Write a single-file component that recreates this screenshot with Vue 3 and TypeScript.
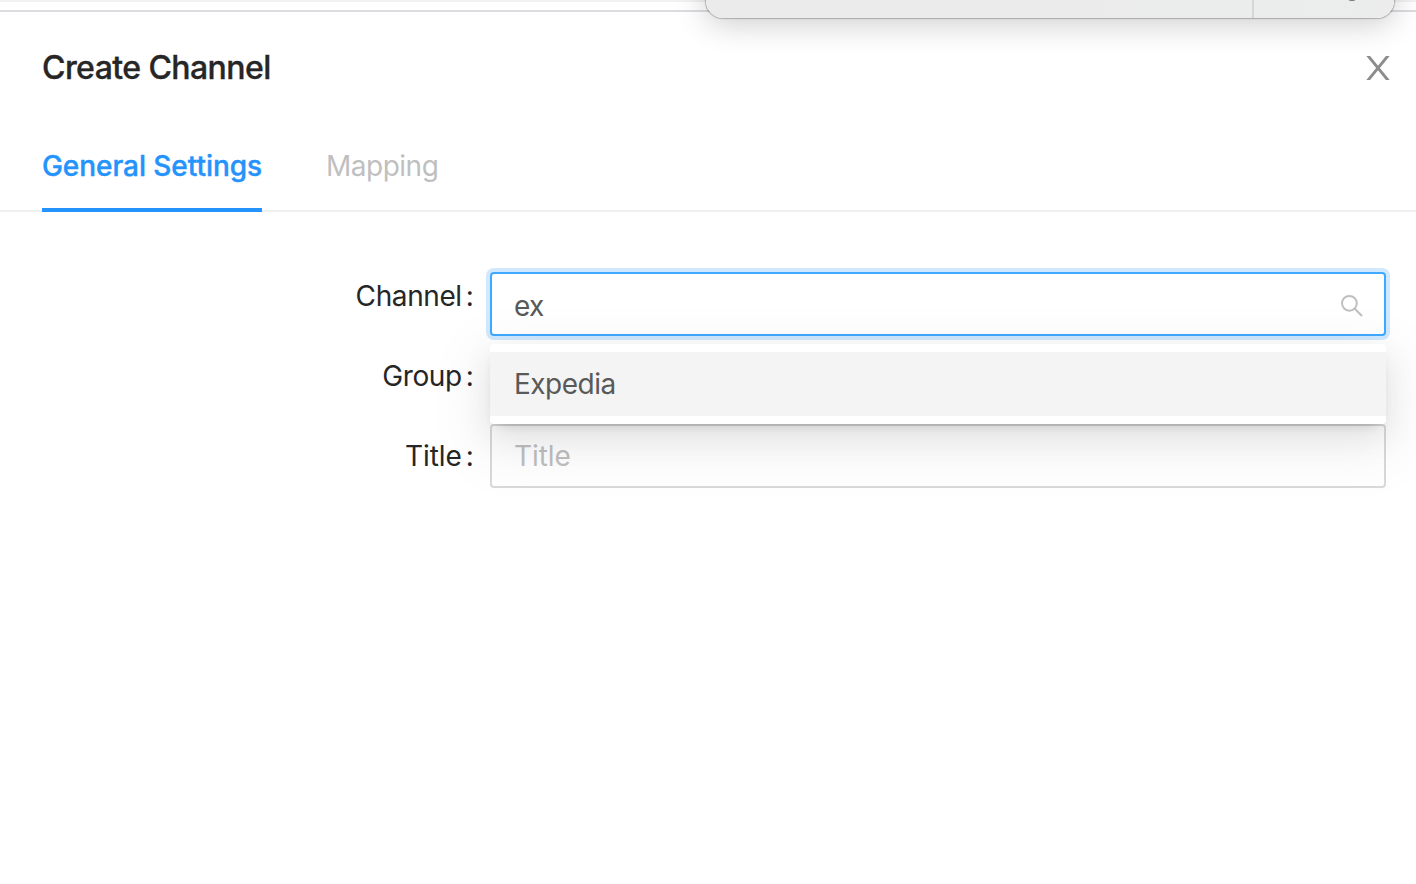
<script setup lang="ts">
import { ref } from 'vue'

interface Tab {
  key: string
  label: string
}

const tabs: Tab[] = [
  { key: 'general', label: 'General Settings' },
  { key: 'mapping', label: 'Mapping' },
]
const activeTab = ref('general')
const query = ref('ex')
const title = ref('')
const options = ['Expedia']
</script>

<template>
  <div class="page">
    <div class="backdrop-edge"></div>
    <div class="toolbar">
      <div class="toolbar-main"></div>
      <div class="toolbar-side"><span class="knob"></span></div>
    </div>

    <section class="drawer">
      <header class="header">
        <h1 class="heading">Create Channel</h1>
        <button class="close" aria-label="Close">
          <svg width="24" height="24" viewBox="0 0 24 24">
            <path d="M1.4-1 22.6 25M22.6-1 1.4 25" fill="none" stroke="#8c8c8c" stroke-width="2.9" />
          </svg>
        </button>
      </header>

      <nav class="tabs">
        <div v-for="tab in tabs" :key="tab.key" class="tab" :class="[tab.key, { active: tab.key === activeTab }]">
          <span>{{ tab.label }}</span>
        </div>
      </nav>

      <form class="form" @submit.prevent>
        <div class="row">
          <label class="label"><span class="name">Channel</span><i>:</i></label>
          <div class="control">
            <div class="field focused">
              <input v-model="query" type="text" />
              <svg class="search" width="24" height="24" viewBox="0 0 24 24">
                <circle cx="9.4" cy="9.3" r="7.4" fill="none" stroke="#bfbfbf" stroke-width="2" />
                <path d="M14.6 14.6 22 22" fill="none" stroke="#bfbfbf" stroke-width="2.1" />
              </svg>
            </div>
            <ul class="dropdown">
              <li v-for="option in options" :key="option">{{ option }}</li>
            </ul>
          </div>
        </div>
        <div class="row">
          <label class="label"><span class="name">Group</span><i>:</i></label>
        </div>
        <div class="row">
          <label class="label"><span class="name short">Title</span><i>:</i></label>
          <div class="control">
            <div class="field">
              <input v-model="title" class="title-input" type="text" placeholder="Title" />
            </div>
          </div>
        </div>
      </form>
    </section>
  </div>
</template>

<style>
html,
body {
  overflow: hidden;
  background: #fff;
}
</style>

<style scoped>
.page {
  position: relative;
  width: 1416px;
  height: 884px;
  overflow: hidden;
  background: #fff;
  color: #262626;
  font-family: Inter, "Liberation Sans", sans-serif;
  font-size: 28px;
}
.backdrop-edge {
  box-sizing: border-box;
  height: 12px;
  border-top: 2px solid #f2f2f2;
  border-bottom: 2px solid #dcdce0;
}
.toolbar {
  position: absolute;
  top: -40px;
  left: 706px;
  display: flex;
  width: 688px;
  height: 58px;
  border-radius: 0 0 17px 17px;
  background: linear-gradient(90deg, #ebebeb 0%, #ebebeb 50%, #ebedec 80%, #ececec 100%);
  box-shadow: 0 0 1px 0.5px rgba(0, 0, 0, 0.24), 0 6px 32px rgba(0, 0, 0, 0.2);
}
.toolbar-main {
  width: 546px;
  border-right: 2px solid #d6d6d6;
}
.toolbar-side {
  display: flex;
  flex: 1;
  align-items: flex-start;
  padding: 27px 0 0 91px;
}
.knob {
  width: 14px;
  height: 14px;
  border-radius: 50%;
  background: #707070;
}
.header {
  display: flex;
  align-items: center;
  justify-content: space-between;
  height: 110px;
  padding: 0 26px 0 42px;
}
.heading {
  margin: 0;
  padding-top: 1px;
  font-size: 32px;
  font-weight: 500;
  letter-spacing: -0.57px;
  line-height: 45px;
  -webkit-text-stroke: 0.35px currentColor;
}
.close {
  display: flex;
  padding: 2px 0 0;
  border: 0;
  background: none;
}
.tabs {
  display: flex;
  gap: 64px;
  box-sizing: border-box;
  height: 90px;
  padding-left: 42px;
  border-bottom: 2px solid #f0f0f0;
}
.tab {
  box-sizing: border-box;
  height: 90px;
  padding-top: 22px;
  color: #bfbfbf;
  line-height: 44px;
  white-space: nowrap;
}
.tab.general {
  width: 220px;
  letter-spacing: -0.06px;
}
.tab.mapping {
  letter-spacing: -0.5px;
}
.tab.active {
  border-bottom: 4px solid #2593fc;
  color: #2593fc;
  font-weight: 500;
  -webkit-text-stroke: 0.4px currentColor;
}
.form {
  display: flex;
  flex-direction: column;
  gap: 16px;
  padding: 52px 30px 0 0;
}
.row {
  display: flex;
  height: 64px;
}
.label {
  display: flex;
  justify-content: flex-end;
  width: 474px;
  margin-right: 16px;
  letter-spacing: -0.3px;
  line-height: 64px;
}
.name {
  letter-spacing: -0.4px;
}
.name.short {
  letter-spacing: -0.1px;
}
.label i {
  margin-right: 0.5px;
  margin-left: 4px;
  font-style: normal;
}
.control {
  position: relative;
  flex: 1;
}
.field {
  display: flex;
  align-items: center;
  box-sizing: border-box;
  height: 64px;
  padding: 0 20px 0 22px;
  border: 2px solid #d9d9d9;
  border-radius: 4px;
  background: #fff;
}
.field.focused {
  margin-top: 8px;
  border-color: #40a9ff;
  box-shadow: 0 0 0 4px rgba(24, 144, 255, 0.2);
}
.field input {
  flex: 1;
  min-width: 0;
  height: 44px;
  padding: 0;
  border: 0;
  outline: 0;
  background: none;
  color: #595959;
  font: inherit;
  letter-spacing: -0.6px;
}
.field.focused input {
  padding-top: 4px;
}
.field .title-input {
  letter-spacing: -0.1px;
}
.field input::placeholder {
  color: #bfbfbf;
}
.search {
  margin-top: 4px;
}
.dropdown {
  position: absolute;
  z-index: 2;
  top: 80px;
  left: 0;
  box-sizing: border-box;
  width: 896px;
  height: 80px;
  margin: 0;
  padding: 8px 0;
  border-radius: 4px;
  background: #fff;
  box-shadow: 0 6px 12px -8px rgba(0, 0, 0, 0.24), 0 12px 32px rgba(0, 0, 0, 0.08), 0 18px 56px 16px rgba(0, 0, 0, 0.05);
  list-style: none;
}
.dropdown li {
  height: 64px;
  padding-left: 24px;
  background: #f4f4f4;
  color: #595959;
  letter-spacing: -0.5px;
  line-height: 64px;
}
</style>
